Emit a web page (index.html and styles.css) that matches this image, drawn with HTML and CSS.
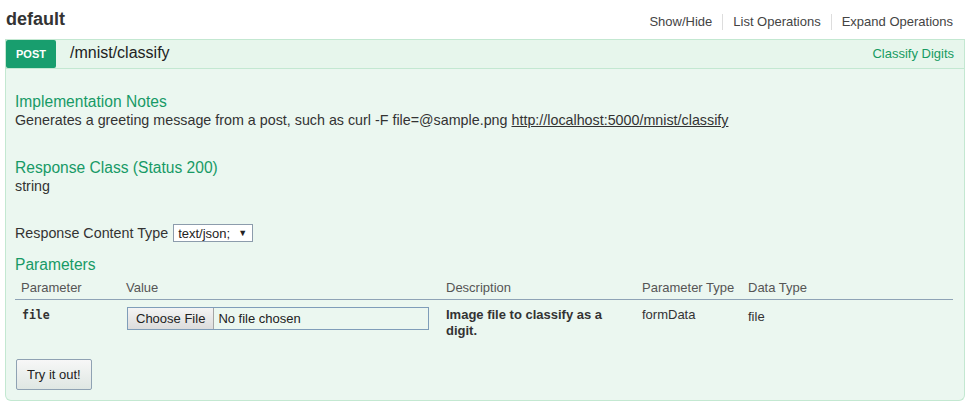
FILE: index.html
```html
<!DOCTYPE html>
<html lang="en">
<head>
<meta charset="utf-8">
<title>default</title>
<link rel="stylesheet" href="styles.css">
</head>
<body>
<div class="page">
  <div class="resource-header">
    <h2 class="resource-title">default</h2>
    <ul class="options">
      <li><a href="#">Show/Hide</a></li>
      <li><a href="#">List Operations</a></li>
      <li><a href="#">Expand Operations</a></li>
    </ul>
  </div>
  <div class="operation">
    <div class="op-heading">
      <span class="method">POST</span>
      <span class="path">/mnist/classify</span>
      <span class="summary">Classify Digits</span>
    </div>
    <div class="op-content">
      <h4 class="section-title">Implementation Notes</h4>
      <p class="text">Generates a greeting message from a post, such as curl -F file=@sample.png <a href="#" class="link">http://localhost:5000/mnist/classify</a></p>
      <h4 class="section-title response">Response Class (Status 200)</h4>
      <p class="text">string</p>
      <div class="content-type">
        <label class="text">Response Content Type</label>
        <span class="select"><span class="select-value">text/json;</span><span class="select-arrow">▼</span></span>
      </div>
      <h4 class="section-title params-title">Parameters</h4>
      <table class="params">
        <colgroup>
          <col class="c-param"><col class="c-value"><col class="c-desc"><col class="c-ptype"><col>
        </colgroup>
        <thead>
          <tr><th>Parameter</th><th>Value</th><th>Description</th><th>Parameter Type</th><th>Data Type</th></tr>
        </thead>
        <tbody>
          <tr>
            <td class="code">file</td>
            <td><input type="file" class="file-input"></td>
            <td class="desc">Image file to classify as a digit.</td>
            <td>formData</td>
            <td class="dtype">file</td>
          </tr>
        </tbody>
      </table>
      <div class="actions"><button class="try" type="button">Try it out!</button></div>
    </div>
  </div>
</div>
</body>
</html>
```
FILE: styles.css
```css
html, body {
  margin: 0;
  padding: 0;
  background: #fff;
}
body {
  font-family: "Liberation Sans", Arial, sans-serif;
  color: #333;
}
.page {
  padding: 0 4px 0 5px;
}
.resource-header {
  display: flex;
  justify-content: space-between;
  align-items: flex-start;
  height: 39px;
  box-sizing: border-box;
  padding: 0 12px 0 1px;
}
.resource-title {
  margin: 9px 0 0;
  font-size: 18px;
  line-height: 20px;
  font-weight: bold;
  color: #333;
}
.options {
  list-style: none;
  margin: 14px 0 0;
  padding: 0;
  display: flex;
}
.options li {
  padding: 0 10px;
  border-right: 1px solid #ddd;
  font-size: 13px;
  line-height: 16px;
}
.options li:last-child {
  padding-right: 0;
  border-right: none;
}
.options a {
  color: #444;
  text-decoration: none;
}
.op-heading {
  display: flex;
  align-items: flex-start;
  height: 30px;
  box-sizing: border-box;
  border: 1px solid #c3e8d1;
  background: #e7f6ec;
}
.method {
  width: 50px;
  height: 28px;
  line-height: 28px;
  background: #189e6e;
  color: #fff;
  font-size: 11px;
  font-weight: bold;
  text-align: center;
  border-radius: 2px;
}
.path {
  margin-left: 14px;
  font-size: 16px;
  line-height: 26px;
  color: #222;
}
.summary {
  margin-left: auto;
  padding-right: 10px;
  font-size: 13px;
  line-height: 28px;
  color: #179b62;
}
.op-content {
  border: 1px solid #c3e8d1;
  border-top: none;
  background: #ebf7f0;
  padding: 24px 11px 10px 9px;
  border-radius: 0 0 6px 6px;
}
.section-title {
  margin: 0;
  font-size: 15.6px;
  line-height: 18px;
  font-weight: normal;
  color: #179a66;
}
.section-title.response { margin-top: 30px; }
.section-title.params-title { margin-top: 14px; }
.text {
  margin: 0;
  font-size: 14.3px;
  line-height: 18px;
  color: #333;
}
.link {
  color: #333;
  text-decoration: underline;
}
.content-type {
  margin-top: 29px;
  display: flex;
  align-items: center;
  gap: 5px;
  height: 18px;
}
.select {
  display: inline-flex;
  align-items: center;
  height: 18px;
  box-sizing: border-box;
  border: 1px solid #8c9cac;
  background: #fff;
  padding: 0 5px 0 4px;
  gap: 8px;
  font-size: 13px;
  color: #222;
}
.select-arrow {
  font-size: 9px;
  line-height: 1;
}
.params {
  width: 100%;
  border-collapse: collapse;
  table-layout: fixed;
  margin: 0;
}
.c-param { width: 105px; }
.c-value { width: 320px; }
.c-desc { width: 196px; }
.c-ptype { width: 106px; }
.params th {
  text-align: left;
  font-size: 13px;
  line-height: 18px;
  font-weight: normal;
  color: #555;
  padding: 5px 6px 2px;
  border-bottom: 1px solid #8ea3b6;
}
.params td {
  padding: 7px 6px;
  vertical-align: top;
  font-size: 13px;
  line-height: 16px;
  color: #333;
}
.params td.code {
  font-family: "DejaVu Sans Mono", "Liberation Mono", monospace;
  font-size: 11.5px;
  font-weight: bold;
  padding-left: 7px;
}
.params td.desc {
  font-weight: bold;
}
.params td.dtype {
  padding-top: 9px;
}
.file-input {
  display: block;
  width: 302px;
  height: 23px;
  box-sizing: border-box;
  margin: 0 0 0 1px;
  padding: 0;
  border: 1px solid #7f9db9;
  background: transparent;
  font-family: "Liberation Sans", Arial, sans-serif;
  font-size: 13px;
  color: #222;
}
.file-input::file-selector-button {
  height: 21px;
  margin: 0 4px 0 0;
  padding: 0 8px;
  border: none;
  border-right: 1px solid #a5a5a5;
  background: linear-gradient(#f4f4f4, #dcdcdc);
  font-family: "Liberation Sans", Arial, sans-serif;
  font-size: 13px;
  color: #222;
}
.actions {
  margin-top: 13px;
}
.try {
  display: block;
  height: 31px;
  padding: 0 10px;
  margin: 0 0 0 1px;
  border: 1px solid #8fa2b3;
  border-radius: 2px;
  background: linear-gradient(#f7f7f7, #dfe7e3);
  font-family: "Liberation Sans", Arial, sans-serif;
  font-size: 13px;
  color: #222;
}
```
